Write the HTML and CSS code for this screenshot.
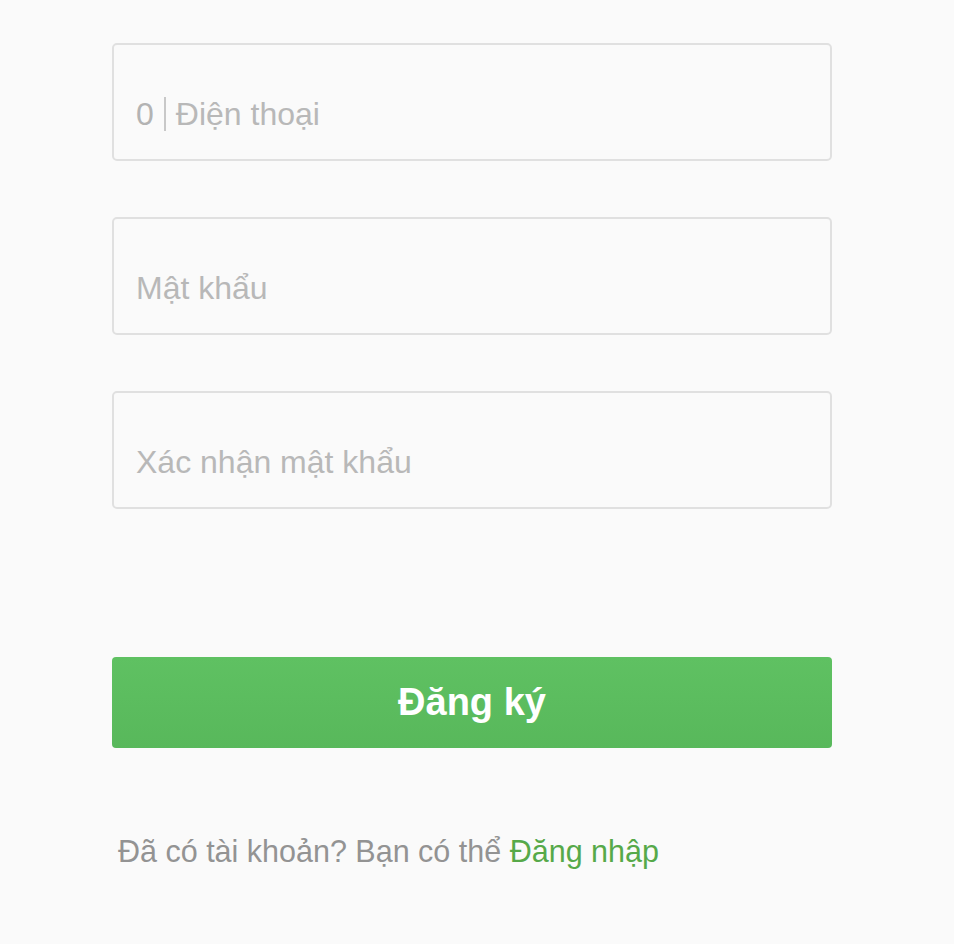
FILE: index.html
```html
<!DOCTYPE html>
<html lang="vi">
<head>
<meta charset="utf-8">
<link rel="stylesheet" href="styles.css">
</head>
<body>
<main class="form">
  <div class="field">
    <span class="prefix">0</span>
    <span class="divider"></span>
    <span class="placeholder">Điện thoại</span>
  </div>
  <div class="field">
    <span class="placeholder">Mật khẩu</span>
  </div>
  <div class="field">
    <span class="placeholder">Xác nhận mật khẩu</span>
  </div>
  <button class="submit">Đăng ký</button>
  <p class="footer">Đã có tài khoản? Bạn có thể <a class="link">Đăng nhập</a></p>
</main>
</body>
</html>
```
FILE: styles.css
```css
html, body {
  margin: 0;
  padding: 0;
  background: #fafafa;
}
body {
  font-family: "Liberation Sans", Arial, sans-serif;
}
.form {
  width: 720px;
  margin-left: 112px;
  padding-top: 43px;
  display: flex;
  flex-direction: column;
}
.field {
  box-sizing: border-box;
  height: 118px;
  border: 2px solid #e0e0e0;
  border-radius: 5px;
  background: #fafafa;
  display: flex;
  align-items: center;
  padding-left: 22px;
  padding-top: 24px;
  margin-bottom: 56px;
  font-size: 32px;
  color: #b8b8b8;
}
.prefix {
  color: #b3b3b3;
}
.divider {
  width: 2px;
  height: 34px;
  background: #c8c8c8;
  margin: 0 10px 0 10px;
}
.submit {
  margin-top: 92px;
  height: 91px;
  border: none;
  border-radius: 4px;
  background: linear-gradient(#5fc162, #58b85b);
  color: #fff;
  font-family: "Liberation Sans", Arial, sans-serif;
  font-weight: bold;
  font-size: 38px;
  padding: 0;
}
.footer {
  margin: 86px 0 0 6px;
  font-size: 30.5px;
  color: #939393;
}
.link {
  color: #56a949;
}
```
